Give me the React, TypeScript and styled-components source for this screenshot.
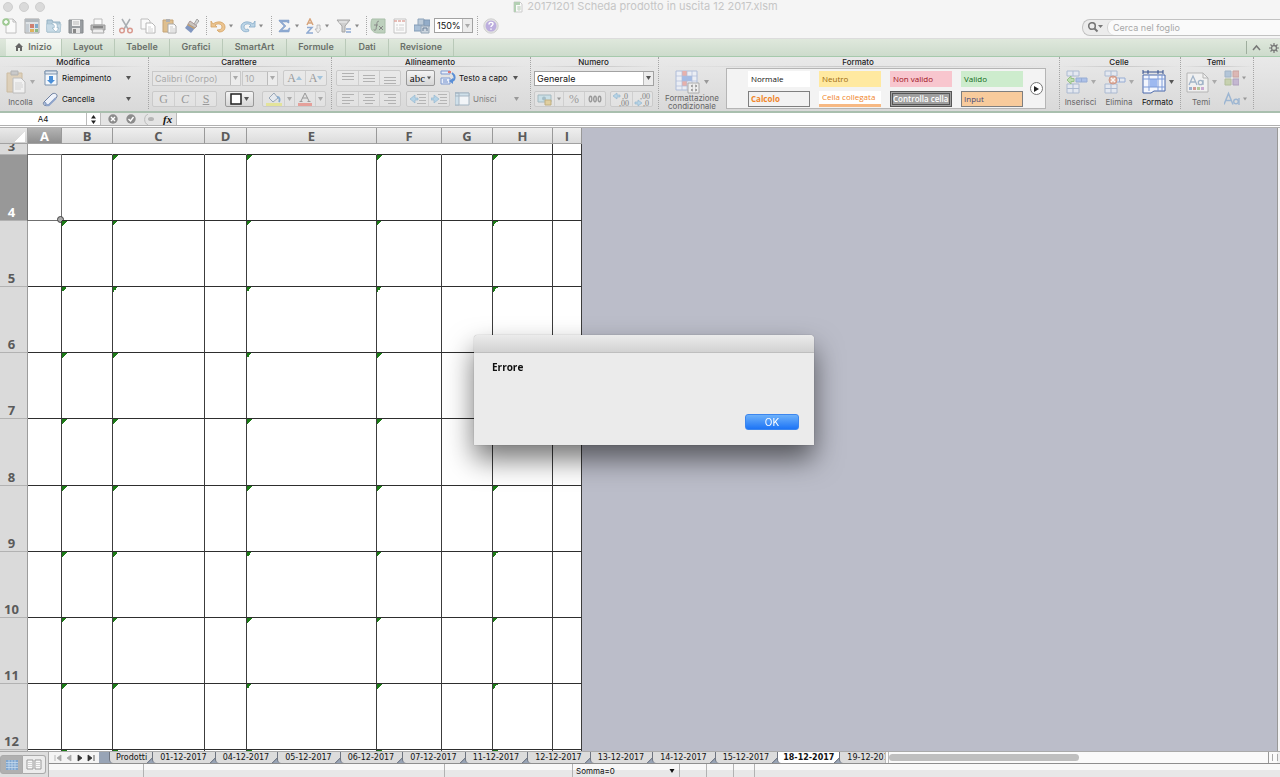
import React from "react";
import styled, { createGlobalStyle, css } from "styled-components";

const UI = `Inter, "Noto Sans", sans-serif`;
const HUMANIST = `"Open Sans", "Noto Sans", sans-serif`;

const GlobalStyle = createGlobalStyle`
  * { box-sizing: border-box; }
  body { margin: 0; background: #f5f5f5; font-family: ${UI}; font-size: 8px; color: #111; overflow: hidden; }
  button, input, select { font: inherit; color: inherit; margin: 0; padding: 0; border: 0; background: none; outline: none; }
  button { display: inline-flex; align-items: center; justify-content: center; white-space: nowrap; }
  svg { display: block; flex: none; }
`;

const AppWindow = styled.div`
  display: flex;
  flex-direction: column;
  height: 100vh;
`;

/* ---------- title bar ---------- */
const TitleBar = styled.header`
  display: grid;
  grid-template-columns: 44px 1fr 36px;
  align-items: center;
  height: 13px;
  padding-left: 3px;
`;
const Lights = styled.div`
  display: flex;
  gap: 6px;
`;
const Light = styled.button`
  width: 10px;
  height: 10px;
  border-radius: 50%;
  background: #dadada;
  border: 1px solid #cfcfcf;
`;
const DocTitle = styled.h1`
  display: flex;
  align-items: center;
  justify-content: center;
  gap: 4px;
  margin: 0;
  font-size: 11px;
  line-height: 13px;
  font-weight: 400;
  color: #c6c6c6;
`;

/* ---------- quick toolbar ---------- */
const QuickBar = styled.div`
  display: flex;
  align-items: center;
  height: 25px;
`;
const ToolButton = styled.button<{ $menu?: boolean }>`
  width: ${(p) => (p.$menu ? 30 : 22)}px;
  height: 20px;
  justify-content: flex-start;
  gap: 3px;
  padding-left: 2px;
`;
const ToolSeparator = styled.span<{ $w?: number }>`
  width: ${(p) => p.$w ?? 4}px;
  height: 19px;
  display: flex;
  justify-content: center;
  &::before {
    content: "";
    border-left: 1px dotted #a8a8a8;
  }
`;
const SearchBox = styled.label`
  display: flex;
  align-items: center;
  width: 198px;
  height: 17px;
  margin: 3px 0 0 auto;
  border: 1px solid #c2c2c2;
  border-right: 0;
  border-radius: 8px 0 0 8px;
  background: #ececec;
  overflow: hidden;
`;
const SearchIcon = styled.span`
  display: flex;
  width: 24px;
  padding-left: 4px;
`;
const SearchInput = styled.input`
  flex: 1;
  min-width: 0;
  height: 15px;
  padding-left: 5px;
  border-left: 1px solid #d2d2d2;
  border-radius: 7px 0 0 7px;
  background: #fafafa;
  font-size: 9px;
  &::placeholder { color: #a8a8a8; opacity: 1; }
`;

/* ---------- drop-downs ---------- */
const SelectShell = styled.span<{ $w: number; $off?: boolean }>`
  display: inline-flex;
  align-items: center;
  position: relative;
  width: ${(p) => p.$w}px;
  height: 15px;
  border: 1px solid ${(p) => (p.$off ? "#c9c9c9" : "#a2a2a2")};
  background: ${(p) => (p.$off ? "#e6e6e6" : "#fff")};
  color: ${(p) => (p.$off ? "#aaa" : "#111")};
  font-size: 9px;
  & select {
    appearance: none;
    width: 100%;
    height: 13px;
    padding-left: 2px;
    opacity: 1;
  }
`;
const SelectArrow = styled.span`
  position: absolute;
  right: 0;
  top: 0;
  display: flex;
  align-items: center;
  justify-content: center;
  width: 10px;
  height: 13px;
  border-left: 1px solid #bbb;
  background: #ececec;
  pointer-events: none;
`;

/* ---------- ribbon tabs ---------- */
const TabStrip = styled.nav`
  display: flex;
  align-items: stretch;
  height: 19px;
  padding-left: 6px;
  border-top: 1px solid #dcdcdc;
  border-bottom: 1px solid #a5c9ac;
  background: linear-gradient(#dfe8dc, #cddbcc);
`;
const RibbonTab = styled.button<{ $w: number; $active?: boolean }>`
  width: ${(p) => p.$w}px;
  gap: 5px;
  padding-bottom: 2px;
  border-right: 1px solid #b9c9b8;
  font-size: 9px;
  font-weight: 600;
  color: #6a706a;
  ${(p) => p.$active && css`background: linear-gradient(#f3f7f1, #e3ebe1);`}
`;
const TabTools = styled.div`
  display: flex;
  align-items: center;
  gap: 8px;
  margin: 2px 0 2px auto;
  padding-left: 5px;
  border-left: 1px solid #9fae9e;
`;

/* ---------- ribbon ---------- */
const Ribbon = styled.div`
  display: flex;
  height: 56px;
  border-bottom: 2px solid #a9bfae;
  background: linear-gradient(#e9e9e9, #d9d9d9);
`;
const Group = styled.section<{ $w: number }>`
  display: flex;
  flex-direction: column;
  width: ${(p) => p.$w}px;
  height: 52px;
  border-right: 1px dotted #a5a5a5;
`;
const GroupTitle = styled.h2`
  margin: 0;
  height: 10px;
  line-height: 10px;
  padding-right: 2px;
  font-size: 8px;
  font-weight: 500;
  text-align: center;
  color: #222;
  border-bottom: 1px solid;
  border-image: linear-gradient(90deg, transparent, #c6c6c6, transparent) 1;
`;
const GroupBody = styled.div<{ $gap?: number; $pad?: number }>`
  display: flex;
  gap: ${(p) => p.$gap ?? 0}px;
  padding: 3px 0 0 ${(p) => p.$pad ?? 3}px;
`;
const Stack = styled.div`
  display: flex;
  flex-direction: column;
  gap: 5px;
`;
const Line = styled.div<{ $gap?: number }>`
  display: flex;
  align-items: center;
  gap: ${(p) => p.$gap ?? 0}px;
  height: 16px;
`;
const BigButton = styled.button<{ $w: number; $on?: boolean; $two?: boolean }>`
  flex-direction: column;
  justify-content: flex-start;
  width: ${(p) => p.$w}px;
  height: 38px;
  line-height: 8px;
  gap: ${(p) => (p.$two ? 0 : 4)}px;
  white-space: ${(p) => (p.$two ? "normal" : "nowrap")};
  color: ${(p) => (p.$on ? "#111" : "#666")};
`;
const BigIcon = styled.span`
  display: flex;
  align-items: center;
  gap: 3px;
  height: 24px;
`;
const MenuButton = styled.button<{ $w: number; $off?: boolean }>`
  width: ${(p) => p.$w}px;
  height: 16px;
  justify-content: flex-start;
  gap: 3px;
  color: ${(p) => (p.$off ? "#808080" : "#111")};
  & > :last-child { margin-left: auto; }
`;
const Segments = styled.div`
  display: flex;
  height: 16px;
  border: 1px solid #cacaca;
  border-radius: 2px;
  background: rgba(240, 240, 240, 0.35);
  & > * + * { border-left: 1px solid #cfcfcf; }
`;
const Segment = styled.button<{ $w: number; $italic?: boolean; $underline?: boolean }>`
  width: ${(p) => p.$w}px;
  font-family: "Liberation Serif", serif;
  font-size: 12px;
  line-height: 12px;
  color: #999;
  font-style: ${(p) => (p.$italic ? "italic" : "normal")};
  text-decoration: ${(p) => (p.$underline ? "underline" : "none")};
`;
const ActiveButton = styled.button<{ $w: number }>`
  width: ${(p) => p.$w}px;
  height: 16px;
  gap: 2px;
  border: 1px solid #999;
  border-radius: 2px;
  background: linear-gradient(#f4f4f4, #d6d6d6);
  font-family: "Liberation Serif", serif;
  font-size: 11px;
`;

/* ---------- cell style gallery ---------- */
const Gallery = styled.div`
  display: flex;
  align-items: center;
  width: 320px;
  height: 41px;
  margin-top: -2px;
  padding-left: 21px;
  border: 1px solid #b5b5b5;
  background: #f3f3f3;
`;
const Swatches = styled.div`
  display: grid;
  grid-template-columns: repeat(4, 62px);
  gap: 4px 9px;
`;
const Swatch = styled.button<{ $bg: string; $fg: string; $border?: string; $kind?: "double" | "under"; $bold?: boolean }>`
  height: 16px;
  justify-content: flex-start;
  padding: 0 3px;
  font-family: ${HUMANIST};
  line-height: 10px;
  font-weight: ${(p) => (p.$bold ? 700 : 500)};
  background: ${(p) => p.$bg};
  color: ${(p) => p.$fg};
  ${(p) => p.$border && !p.$kind && css`border: 1px solid ${p.$border}; padding: 0 2px;`}
  ${(p) => p.$kind === "double" && css`border: 3px double ${p.$border}; padding: 0; font-weight: 600;`}
  ${(p) => p.$kind === "under" && css`border-bottom: 3px solid ${p.$border};`}
`;
const MoreButton = styled.button`
  width: 13px;
  height: 13px;
  margin-left: 7px;
  border: 1px solid #777;
  border-radius: 50%;
  background: #fff;
`;

/* ---------- formula bar ---------- */
const FormulaBar = styled.div`
  display: flex;
  height: 15px;
  border-bottom: 3px double #b0b0b0;
  background: #fff;
`;
const NameBox = styled.input`
  width: 87px;
  text-align: center;
  font-size: 8px;
  border-right: 1px solid #bbb;
`;
const Stepper = styled.button`
  width: 14px;
  border-right: 1px solid #bbb;
`;
const FormulaTools = styled.div`
  display: flex;
  align-items: center;
  gap: 8px;
  width: 76px;
  padding-left: 7px;
  background: #e4e4e4;
  border-right: 1px solid #bbb;
`;
const FxButton = styled.button`
  font-family: "Liberation Serif", serif;
  font-style: italic;
  font-weight: 700;
  font-size: 11px;
  line-height: 11px;
`;
const FormulaInput = styled.input`
  flex: 1;
`;

/* ---------- sheet ---------- */
const SheetArea = styled.main`
  display: flex;
  flex: 1;
  min-height: 0;
  overflow: hidden;
  background: #bbbdc9;
`;
const Gutter = styled.div`
  width: 3px;
  margin-left: auto;
  border-left: 1px solid #999;
  background: #f5f5f5;
`;
const Grid = styled.table`
  border-collapse: separate;
  border-spacing: 0;
  table-layout: fixed;
  width: 582px;
  align-self: flex-start;
  font-family: ${HUMANIST};
  background: #fff;
`;
const Corner = styled.th`
  height: 16px;
  padding: 0;
  border-right: 1px solid #a2a2a2;
  border-bottom: 1px solid #a2a2a2;
  background: linear-gradient(135deg, transparent 50%, #fff 50%) no-repeat right 2px bottom 1px / 11px 11px, linear-gradient(#e9e9e9, #d2d2d2);
`;
const ColumnHead = styled.th<{ $selected?: boolean }>`
  height: 16px;
  padding: 0;
  font-size: 13px;
  line-height: 14px;
  font-weight: 700;
  color: ${(p) => (p.$selected ? "#fff" : "#5a5a5a")};
  background: ${(p) => (p.$selected ? "linear-gradient(#b4b4b4, #8f8f8f)" : "linear-gradient(#efefef, #dcdcdc)")};
  border-right: 1px solid #999;
  border-bottom: 1px solid #a2a2a2;
`;
const RowHead = styled.th<{ $selected?: boolean }>`
  padding: 0 4px 0 0;
  vertical-align: bottom;
  font-size: 13px;
  line-height: 16px;
  font-weight: 700;
  color: ${(p) => (p.$selected ? "#fff" : "#5a5a5a")};
  background: ${(p) => (p.$selected ? "#989898" : "#dadada")};
  border-right: 1px solid #9c9c9c;
  border-bottom: 1px solid #b2b2b2;
`;
const ClippedNumber = styled.div`
  display: flex;
  align-items: flex-end;
  justify-content: center;
  height: 10px;
  overflow: hidden;
`;
const Cell = styled.td<{ $h: number; $flag?: boolean; $edge?: boolean }>`
  position: relative;
  height: ${(p) => p.$h}px;
  padding: 0;
  border-bottom: 1px solid #2e2e2e;
  border-right: 1px solid ${(p) => (p.$edge ? "#3c3c3c" : "transparent")};
  ${(p) => p.$flag && css`background: linear-gradient(135deg, #1b7a16 50%, transparent 50%) no-repeat 0 0 / 5px 5px;`}
`;
const Selection = styled.span`
  position: absolute;
  inset: -1px;
  border: 1px solid #6f6f6f;
  &::after {
    content: "";
    position: absolute;
    right: -3px;
    bottom: -3px;
    width: 5px;
    height: 5px;
    border: 1px solid #444;
    border-radius: 50%;
    background: #aaa;
  }
`;

/* ---------- bottom area ---------- */
const Footer = styled.footer`
  display: flex;
  height: 26px;
  border-top: 1px solid #aaa;
  background: #dedede;
`;
const ViewSwitch = styled.div`
  display: flex;
  align-items: center;
  width: 49px;
  border-right: 1px solid #aaa;
`;
const ViewButton = styled.button<{ $active?: boolean }>`
  width: 23px;
  height: 19px;
  border: 1px solid #aaa;
  background: ${(p) => (p.$active ? "#b0b0b0" : "#ececec")};
  &:first-child { border-radius: 3px 0 0 3px; }
  &:last-child { border-radius: 0 3px 3px 0; border-left: 0; }
`;
const FooterRows = styled.div`
  display: flex;
  flex-direction: column;
  flex: 1;
  min-width: 0;
`;
const SheetTabsRow = styled.div`
  display: flex;
  height: 12px;
  border-bottom: 1px solid #8e8e8e;
  background: #98a4b6;
`;
const SheetNav = styled.div`
  display: flex;
  align-items: center;
  width: 50px;
  margin-right: 10px;
  background: #f4f4f4;
`;
const NavButton = styled.button`
  width: 11px;
  height: 11px;
  &:first-child { margin-left: 3px; }
`;
const SheetTabs = styled.div`
  display: flex;
  width: 776px;
  overflow: hidden;
`;
const SheetTab = styled.button<{ $active?: boolean }>`
  position: relative;
  flex: none;
  height: 11px;
  padding: 0 8px 0 7px;
  border-left: 1px solid #6e7480;
  border-radius: 0 0 0 4px;
  background: ${(p) => (p.$active ? "#fff" : "#dcdcdc")};
  font-family: "DejaVu Sans", sans-serif;
  font-size: 8px;
  line-height: 11px;
  font-weight: ${(p) => (p.$active ? 700 : 400)};
  &:first-child { padding: 0 5px 0 6px; }
  ${(p) => p.$active && css`padding: 0 5px;`}
  &::after {
    content: "";
    position: absolute;
    right: 0;
    bottom: 0;
    width: 5px;
    height: 6px;
    background: linear-gradient(135deg, transparent 50%, #6e7480 50%, #98a4b6 70%);
  }
`;
const ScrollTrack = styled.div`
  flex: 1;
  display: flex;
  align-items: center;
  border-left: 4px double #bbb;
  background: #fafafa;
`;
const ScrollThumb = styled.div`
  width: 50%;
  height: 7px;
  border-radius: 4px;
  background: #bfbfbf;
`;
const ScrollGrip = styled.div`
  width: 12px;
  padding: 2px 3px;
  border-left: 1px solid #999;
  border-right: 3px solid #f0f0f0;
  background: #fafafa;
  &::before {
    content: "";
    display: block;
    width: 4px;
    height: 7px;
    border: solid #aaa;
    border-width: 0 1px;
  }
`;
const StatusBar = styled.div`
  display: flex;
  flex: 1;
  background: linear-gradient(#f8f8f8 50%, #e8e8e8 50%);
`;
const StatusCell = styled.div<{ $w?: number }>`
  display: flex;
  align-items: center;
  justify-content: space-between;
  ${(p) => (p.$w ? css`width: ${p.$w}px; border-right: 1px solid #b2b2b2;` : css`flex: 1;`)}
  padding: 0 3px;
  font-size: 8px;
`;

/* ---------- dialog ---------- */
const Dialog = styled.div`
  position: fixed;
  left: calc(50% + 4px);
  top: 335px;
  transform: translateX(-50%);
  display: flex;
  flex-direction: column;
  width: 340px;
  height: 110px;
  border-radius: 4px 4px 0 0;
  background: #ebebeb;
  box-shadow: 0 0 1px rgba(0, 0, 0, 0.5), 0 14px 28px rgba(0, 0, 0, 0.55);
`;
const DialogBar = styled.div`
  height: 18px;
  border-bottom: 1px solid #bebebe;
  border-radius: 4px 4px 0 0;
  background: linear-gradient(#ebebeb, #d2d2d2);
`;
const DialogText = styled.p`
  margin: 0;
  padding: 7px 18px;
  font-family: ${HUMANIST};
  font-size: 10px;
  line-height: 14px;
  font-weight: 700;
`;
const DialogActions = styled.div`
  display: flex;
  justify-content: flex-end;
  margin-top: auto;
  padding: 0 15px 15px;
`;
const OkButton = styled.button`
  width: 54px;
  height: 16px;
  border: 1px solid #3c86ee;
  border-radius: 3px;
  background: linear-gradient(#6db1fa, #1d74f6);
  color: #fff;
  font-size: 10px;
`;

/* ---------- drawings ---------- */
const Caret = ({ c = "#555", s = 5 }: { c?: string; s?: number }) => (
  <svg width={s} height="4" viewBox="0 0 5 4"><path d="M0 0h5L2.500 4z" fill={c} /></svg>
);
const Art = ({ children, w = 16, h = 16, o = 1 }: { children: React.ReactNode; w?: number; h?: number; o?: number }) => (
  <svg width={w} height={h} viewBox={`0 0 ${w} ${h}`} fill="none" opacity={o}>{children}</svg>
);

const tools: Record<string, React.ReactNode> = {
  Nuovo: <Art><path d="M4 1h7l3 3v11H4z" fill="#fafafa" stroke="#c0c0c0" /><path d="M11 1v3h3" stroke="#bbb" /><circle cx="4" cy="4" r="3.800" fill="#9fca94" /><path d="M4 2v4M2 4h4" stroke="#fff" strokeWidth="1.500" /></Art>,
  Modelli: <Art><path d="M1 1h14v14H1z" fill="#dfe3e6" stroke="#a5a5a5" /><path d="M1 1h14v3H1z" fill="#b3b9be" /><path d="M2 6h3v8H2z" fill="#c5ccd2" /><path d="M6 6h4v4H6z" fill="#cf7f70" /><path d="M11 6h3v4h-3z" fill="#7faacb" /><path d="M6 11h4v3H6z" fill="#dfb35e" /><path d="M11 11h3v3h-3z" fill="#8fb987" /></Art>,
  Apri: <Art><path d="M1 2h5l1 2h7v10H1z" fill="#b5ccdb" stroke="#94b0c2" /><path d="M0 6h15l-1 8H1z" fill="#c7dae6" stroke="#a5bfce" strokeWidth=".6" /><path d="M6 5c4-1 6 1 5 5h2l-3 4-4-4h2c1-2 0-4-2-4z" fill="#fff" stroke="#8cabc0" strokeWidth=".6" /></Art>,
  Salva: <Art><path d="M1 2h14v13H1z" fill="#999da1" stroke="#84888b" /><path d="M4 2h8v6H4z" fill="#f2f2f2" /><path d="M5 4h6M5 6h6" stroke="#bbb" /><path d="M4 10h8v5H4z" fill="#e4e4e4" /><path d="M5 11h3v4H5z" fill="#888" /></Art>,
  Stampa: <Art><path d="M4 1h8v6H4z" fill="#fafafa" stroke="#bbb" /><path d="M1 7h14v5H1z" fill="#bababa" stroke="#999" /><path d="M3 9h10" stroke="#777" strokeWidth="1.500" /><path d="M3 11h10l1 4H2z" fill="#eee" stroke="#aaa" /></Art>,
  Taglia: <Art><path d="M4 1l6 10M12 1L6 11" stroke="#aaaeb2" strokeWidth="1.500" /><circle cx="4" cy="12.500" r="2.300" stroke="#d99a90" strokeWidth="1.500" /><circle cx="12" cy="12.500" r="2.300" stroke="#d99a90" strokeWidth="1.500" /></Art>,
  Copia: <Art><path d="M1 1h7l2 2v8H1z" fill="#fafafa" stroke="#bdbdbd" /><path d="M6 5h6l3 3v7H6z" fill="#fff" stroke="#b8b8b8" /><path d="M8 9h3M8 11h5M8 13h5" stroke="#d2d2d2" /></Art>,
  Incolla: <Art><path d="M1 2h10v12H1z" fill="#dfbf8e" stroke="#c4a478" /><path d="M4 1h4v3H4z" fill="#b0b0b0" /><path d="M6 6h6l2 2v7H6z" fill="#fafafa" stroke="#aaa" /><path d="M8 9h3M8 11h5M8 13h5" stroke="#ccc" /></Art>,
  Formato: <Art><path d="M10 6l3-5 2 2-4 5z" fill="#d4d4d4" stroke="#a5a5a5" /><path d="M6 3l7 5-2 2-7-4z" fill="#c9c3bd" stroke="#a99" /><path d="M4 6l7 4-4 5-6-5z" fill="#8297c0" /><path d="M4 6l7 4-1 1-7-4z" fill="#c9a26c" /></Art>,
  Annulla: <Art><path d="M1 3v6h6L5 7c3-2 7-1 7 2 0 2-2 3-5 3l2 2c4 0 6-2 6-5 0-5-7-7-12-3z" fill="#ecc591" stroke="#d3a265" strokeWidth=".8" /></Art>,
  Ripeti: <Art><path d="M15 3v6H9l2-2C8 5 4 6 4 9c0 2 2 3 4 2l1 2c-4 2-8 0-8-4 0-5 7-7 12-3z" fill="#bcd5e7" stroke="#87abc8" strokeWidth=".8" /></Art>,
  Somma: <Art><path d="M3 2h10v3h-1l-1-1H6l4 4-4 4h6l1-2h1l-1 4H3v-1l5-5-5-5z" fill="#8faad2" stroke="#819cc6" strokeWidth=".5" /></Art>,
  Ordina: <Art><path d="M1 7l3-6 3 6M2 5h4" stroke="#d6a47c" strokeWidth="1.500" /><path d="M1 9.500h5L1 15h6" stroke="#8faad2" strokeWidth="1.500" /><path d="M11 7v4H9l3 4 3-4h-1V7z" fill="#ececec" stroke="#b5b5b5" strokeWidth=".8" /></Art>,
  Filtro: <Art><path d="M1 2h13L9 8v6H6V8z" fill="#cfcfcf" stroke="#a5a5a5" /><path d="M3 4h8" stroke="#f0f0f0" /><path d="M10 11h5M10 14h5" stroke="#8fa9d2" strokeWidth="1.500" /></Art>,
  Formula: <Art><path d="M2 1h13v14H8c-5 0-7-3-7-7 0-3 0-5 1-7z" fill="#bdd0bd" stroke="#a9bfa9" /><path d="M9 3.500c-2-1-2 1-3 8-1 1-2 1-2 0M4 7h4M9 8l4 4M13 8l-4 4" stroke="#888" /></Art>,
  Casella: <Art><path d="M2 1h12v14H2z" fill="#fafafa" stroke="#c4c4c4" /><path d="M2 3h12" stroke="#dfa9a1" strokeWidth="1.500" strokeDasharray="3 1" /><path d="M4 7h2M7 7h5M4 10h2M7 10h5M4 12h8" stroke="#d2d2d2" /></Art>,
  Multimedia: <Art><path d="M0 7h8v6H0z" fill="#a9bfd6" stroke="#829bb6" /><path d="M4 1h6v6H4z" fill="#bccad8" stroke="#8ea4bb" /><path d="M10 2h6v6h-6z" fill="#93acc8" stroke="#8199b3" /><path d="M7 8h8v7H7z" fill="#ccd5de" stroke="#93a4b5" /><path d="M9 13v-3h4v3" stroke="#687f98" /></Art>,
  Guida: <Art><circle cx="8" cy="8" r="7.200" fill="#e2e2e2" stroke="#d0d0d0" /><circle cx="8" cy="8" r="5.500" fill="#bcaede" /><path d="M6 6.500c0-3 4-2.500 4-.500 0 1.500-2 1.500-2 3M8 10.500v1.300" stroke="#fff" strokeWidth="1.400" /></Art>,
};

const Tool = ({ name, menu }: { name: string; menu?: boolean }) => (
  <ToolButton $menu={menu} aria-label={name}>{tools[name]}{menu && <Caret c="#888" s={4} />}</ToolButton>
);

const Bars = ({ rows }: { rows: [number, number, number][] }) => (
  <Art w={14} h={12}>
    {rows.map(([x, y, w], i) => <path key={i} d={`M${x} ${y + 0.5}h${w}`} stroke="#b2b2b2" />)}
  </Art>
);
const Indent = ({ flip }: { flip?: boolean }) => (
  <Art w={16} h={12}>
    <path d="M7 1.500h9M9 4.500h7M9 7.500h7M7 10.500h9" stroke="#b5b5b5" />
    <path d={flip ? "M0 5h3V2l5 4-5 4V7H0z" : "M8 5H5V2L0 6l5 4V7h3z"} fill="#b5d3e6" stroke="#8db4ce" strokeWidth=".6" />
  </Art>
);
const Decimals = ({ flip }: { flip?: boolean }) => (
  <Art w={18} h={15}>
    <text x={flip ? 6 : 9} y="7" fontSize="8" fontFamily="Liberation Serif" fill="#808080">{flip ? ",00" : ",0"}</text>
    <text x={flip ? 9 : 6} y="14" fontSize="8" fontFamily="Liberation Serif" fill="#808080">{flip ? ",0" : ",00"}</text>
    <path d={flip ? "M1 10h3V8l4 3-4 3v-2H1z" : "M7 3H4V1L0 4l4 3V5h3z"} fill="#b8d4e6" stroke="#8db4ce" strokeWidth=".6" />
  </Art>
);

const TableBlocks = ({ kind }: { kind: "insert" | "delete" }) => (
  <Art w={22} h={24} o={0.75}>
    <path d="M1 1h12v5H1zM7 1v5M1 14h12v9H1zM7 14v9M1 18.500h12" stroke="#9aadcc" fill="#e4eaf5" />
    <path d="M10 8h11v4H10zM15.500 8v4" fill={kind === "insert" ? "#9cb6ea" : "#e4eaf5"} stroke="#7f9bd0" />
    {kind === "insert"
      ? <path d="M8 8.500H5V6L1 10l4 4v-2.500h3z" fill="#b4dca5" stroke="#7fb86c" />
      : <><circle cx="9" cy="10" r="4" fill="#e0a08a" stroke="#c77f68" /><path d="M7 8l4 4M11 8l-4 4" stroke="#fff" strokeWidth="1.500" /></>}
  </Art>
);

const ribbonTabs: [string, number][] = [
  ["Layout", 53], ["Tabelle", 55], ["Grafici", 53], ["SmartArt", 64], ["Formule", 59], ["Dati", 43], ["Revisione", 65],
];
const columns: [string, number, boolean][] = [
  ["A", 34, false], ["B", 51, true], ["C", 92, true], ["D", 42, false], ["E", 130, true],
  ["F", 65, true], ["G", 51, false], ["H", 60, true], ["I", 29, false],
];
const rows: [number, number][] = [[4, 66], [5, 66], [6, 66], [7, 66], [8, 67], [9, 66], [10, 66], [11, 66], [12, 66]];
const sheets = ["01-12-2017", "04-12-2017", "05-12-2017", "06-12-2017", "07-12-2017", "11-12-2017", "12-12-2017", "13-12-2017", "14-12-2017", "15-12-2017", "18-12-2017", "19-12-2017"];
const navShapes = ["M1 1v6M7 1v6L3 4z", "M6 1v6L2 4z", "M2 1v6l4-3z", "M1 1v6l4-3zM7 1v6"];

export default function App() {
  return (
    <AppWindow>
      <GlobalStyle />
      <TitleBar>
        <Lights><Light aria-label="Chiudi" /><Light aria-label="Riduci" /><Light aria-label="Ingrandisci" /></Lights>
        <DocTitle>
          <Art w={10} h={12}><path d="M1 1h6l2 2v8H1z" fill="#fafafa" stroke="#ccc" /><path d="M1 1h6v3H3v7H1z" fill="#b4d0b4" /><path d="M4 6h4M4 8h4M6 5v5" stroke="#c5d6c5" /></Art>
          20171201 Scheda prodotto in uscita 12 2017.xlsm
        </DocTitle>
      </TitleBar>

      <QuickBar>
        {["Nuovo", "Modelli", "Apri", "Salva", "Stampa"].map((n) => <Tool key={n} name={n} />)}
        <ToolSeparator $w={6} />
        {["Taglia", "Copia", "Incolla", "Formato"].map((n) => <Tool key={n} name={n} />)}
        <ToolSeparator />
        <Tool name="Annulla" menu /><Tool name="Ripeti" menu />
        <ToolSeparator $w={6} />
        <Tool name="Somma" menu /><Tool name="Ordina" menu /><Tool name="Filtro" menu />
        <ToolSeparator />
        {["Formula", "Casella", "Multimedia"].map((n) => <Tool key={n} name={n} />)}
        <SelectShell $w={39}>
          <select aria-label="Zoom"><option>150%</option></select>
          <SelectArrow><Caret c="#aaa" /></SelectArrow>
        </SelectShell>
        <ToolSeparator $w={8} />
        <Tool name="Guida" />
        <SearchBox>
          <SearchIcon>
            <Art w={17} h={12}><circle cx="5" cy="5" r="3.300" stroke="#777" strokeWidth="1.600" /><path d="M7.500 7.500l3 3" stroke="#777" strokeWidth="2" /><path d="M11 4h5l-2.500 3z" fill="#777" /></Art>
          </SearchIcon>
          <SearchInput placeholder="Cerca nel foglio" aria-label="Cerca nel foglio" />
        </SearchBox>
      </QuickBar>

      <TabStrip>
        <RibbonTab $w={56} $active>
          <Art w={8} h={8}><path d="M4 0L0 4h1v4h2V5h2v3h2V4h1z" fill="#666" /></Art>
          Inizio
        </RibbonTab>
        {ribbonTabs.map(([t, w]) => <RibbonTab key={t} $w={w}>{t}</RibbonTab>)}
        <TabTools>
          <Art w={9} h={7}><path d="M1 6l3.500-4L8 6" stroke="#777" strokeWidth="1.500" /></Art>
          <Art w={11} h={10}><circle cx="5" cy="5" r="2.500" stroke="#777" strokeWidth="1.300" /><path d="M5 0v2M5 8v2M0 5h2M8 5h2M1.500 1.500l1.400 1.400M7 7l1.500 1.500M1.500 8.500L3 7M7 3l1.500-1.500" stroke="#777" strokeWidth="1.200" /></Art>
        </TabTools>
      </TabStrip>

      <Ribbon>
        <Group $w={149}>
          <GroupTitle>Modifica</GroupTitle>
          <GroupBody $pad={2}>
            <BigButton $w={37}>
              <BigIcon>
                <Art w={21} h={24} o={0.65}><path d="M1 3h15v19H1z" fill="#dcc7a5" stroke="#c0a880" /><path d="M5 1h7v4H5z" fill="#bbb" stroke="#999" /><path d="M7 8h8l4 4v11H7z" fill="#fafafa" stroke="#aaa" /><path d="M9 13h7M9 15h8M9 17h8M9 19h6" stroke="#ccc" /></Art>
                <Caret c="#aaa" />
              </BigIcon>
              Incolla
            </BigButton>
            <Stack>
              <MenuButton $w={92}>
                <Art w={20}><path d="M6 1h12v14H6z" fill="#f4f8fc" stroke="#7c93ad" /><path d="M6 1h12v3H6z" fill="#dfe6ee" stroke="#7c93ad" /><path d="M10 6h4v4h2l-4 4-4-4h2z" fill="#4a8fd8" /></Art>
                Riempimento <Caret />
              </MenuButton>
              <MenuButton $w={92}>
                <Art w={20}><path d="M5 11l8-8c3-2 7 1 4 4l-8 7c-3 2-6-1-4-3z" fill="#eef2fa" stroke="#6d7f9f" /><path d="M6 11c0 2 2 4 4 3l7-7" stroke="#8fa4ca" strokeWidth="2" /></Art>
                Cancella <Caret />
              </MenuButton>
            </Stack>
          </GroupBody>
        </Group>

        <Group $w={183}>
          <GroupTitle>Carattere</GroupTitle>
          <GroupBody>
            <Stack>
              <Line $gap={1}>
                <SelectShell $w={89} $off>
                  <select aria-label="Tipo di carattere" disabled><option>Calibri (Corpo)</option></select>
                  <SelectArrow><Caret c="#aaa" /></SelectArrow>
                </SelectShell>
                <SelectShell $w={36} $off>
                  <select aria-label="Dimensione carattere" disabled><option>10</option></select>
                  <SelectArrow><Caret c="#aaa" /></SelectArrow>
                </SelectShell>
                <Line $gap={4}><span /><Segments>
                  <Segment $w={21} aria-label="Aumenta dimensione">A<Art w={6} h={4}><path d="M0 4h6L3 0z" fill="#a3c4dc" /></Art></Segment>
                  <Segment $w={21} aria-label="Riduci dimensione">A<Art w={6} h={4}><path d="M0 0h6L3 4z" fill="#a3c4dc" /></Art></Segment>
                </Segments></Line>
              </Line>
              <Line $gap={8}>
                <Segments>
                  <Segment $w={21}>G</Segment><Segment $w={21} $italic>C</Segment><Segment $w={21} $underline>S</Segment>
                </Segments>
                <ActiveButton $w={29} aria-label="Bordi">
                  <Art w={12} h={12}><path d="M1 1h10v10H1z" fill="#fff" stroke="#222" strokeWidth="1.500" /></Art><Caret />
                </ActiveButton>
                <Segments>
                  <Segment $w={21} aria-label="Colore riempimento"><Art w={16} h={14}><path d="M3 6l5-5 4 5-5 4z" fill="#e5e9ee" stroke="#9aa8b8" /><path d="M11 5c3 0 3 3 2 5" stroke="#86aacd" strokeWidth="1.800" /><path d="M0 11h16v3H0z" fill="#e3e39a" /></Art></Segment>
                  <Segment $w={10} aria-label="Altri colori"><Caret c="#aaa" /></Segment>
                  <Segment $w={21} aria-label="Colore carattere"><Art w={16} h={14}><path d="M4 9l4-8 4 8M5.500 6h5M2.500 9.500h3M10.500 9.500h3" stroke="#999" /><path d="M1 11h14v3H1z" fill="#e5a09a" /></Art></Segment>
                  <Segment $w={10} aria-label="Altri colori carattere"><Caret c="#aaa" /></Segment>
                </Segments>
              </Line>
            </Stack>
          </GroupBody>
        </Group>

        <Group $w={199}>
          <GroupTitle>Allineamento</GroupTitle>
          <GroupBody $pad={4}>
            <Stack>
              <Line $gap={5}>
                <Segments>
                  <Segment $w={21} aria-label="In alto"><Bars rows={[[1, 1, 12], [1, 4, 12], [1, 7, 12]]} /></Segment>
                  <Segment $w={21} aria-label="Al centro"><Bars rows={[[1, 3, 12], [1, 6, 12], [1, 9, 12]]} /></Segment>
                  <Segment $w={21} aria-label="In basso"><Bars rows={[[1, 5, 12], [1, 8, 12], [1, 11, 12]]} /></Segment>
                </Segments>
                <ActiveButton $w={29}>abc<Caret s={4} /></ActiveButton>
                <MenuButton $w={78}>
                  <Art w={16}><path d="M1 1h9v3H1zM1 8h9v6H1z" fill="#e8eefa" stroke="#7f99cf" /><path d="M8 2h3" stroke="#d77" strokeWidth="2" /><path d="M3 10h4M3 12h5" stroke="#6f8cc9" /><path d="M12 3c4 3 3 8-1 8" stroke="#5a8fd6" strokeWidth="2" /><path d="M13 8v6l-4-3z" fill="#5a8fd6" /></Art>
                  Testo a capo <Caret />
                </MenuButton>
              </Line>
              <Line $gap={5}>
                <Segments>
                  <Segment $w={21} aria-label="A sinistra"><Bars rows={[[1, 1, 12], [1, 4, 8], [1, 7, 12], [1, 10, 8]]} /></Segment>
                  <Segment $w={21} aria-label="Centrato"><Bars rows={[[1, 1, 12], [3, 4, 8], [1, 7, 12], [3, 10, 8]]} /></Segment>
                  <Segment $w={21} aria-label="A destra"><Bars rows={[[1, 1, 12], [5, 4, 8], [1, 7, 12], [5, 10, 8]]} /></Segment>
                </Segments>
                <Segments>
                  <Segment $w={21} aria-label="Riduci rientro"><Indent /></Segment>
                  <Segment $w={21} aria-label="Aumenta rientro"><Indent flip /></Segment>
                </Segments>
                <MenuButton $w={64} $off>
                  <Art w={15}><path d="M0 2h14v12H0z" fill="#f2f5f8" stroke="#a5b5c2" /><path d="M0 2h14v3H0zM0 2h4v12H0z" fill="#cfe0ea" stroke="#a5b5c2" /></Art>
                  Unisci <Caret c="#999" />
                </MenuButton>
              </Line>
            </Stack>
          </GroupBody>
        </Group>

        <Group $w={128}>
          <GroupTitle>Numero</GroupTitle>
          <GroupBody>
            <Stack>
              <Line>
                <SelectShell $w={120}>
                  <select aria-label="Formato numero"><option>Generale</option></select>
                  <SelectArrow><Caret /></SelectArrow>
                </SelectShell>
              </Line>
              <Line $gap={4}>
                <Segments>
                  <Segment $w={19} aria-label="Valuta"><Art w={16} h={13}><path d="M1 2h13v7H1z" fill="#c9dfe6" stroke="#a5b9c0" /><circle cx="7" cy="5.500" r="2" fill="#a5bdc6" /><path d="M8 7h6v5H8z" fill="#e0cf9f" stroke="#bfae80" /></Art></Segment>
                  <Segment $w={9} aria-label="Altre valute"><Caret c="#999" s={4} /></Segment>
                  <Segment $w={21}>%</Segment>
                  <Segment $w={21} aria-label="Separatore migliaia"><Art w={14} h={10}><g stroke="#999" strokeWidth="1.400"><ellipse cx="2.500" cy="5" rx="1.300" ry="2.700" /><ellipse cx="7" cy="5" rx="1.300" ry="2.700" /><ellipse cx="11.500" cy="5" rx="1.300" ry="2.700" /></g></Art></Segment>
                </Segments>
                <Segments>
                  <Segment $w={21} aria-label="Aumenta decimali"><Decimals /></Segment>
                  <Segment $w={20} aria-label="Riduci decimali"><Decimals flip /></Segment>
                </Segments>
              </Line>
            </Stack>
          </GroupBody>
        </Group>

        <Group $w={401}>
          <GroupTitle>Formato</GroupTitle>
          <GroupBody $gap={4}>
            <BigButton $w={60} $two>
              <BigIcon>
                <Art w={26} h={24} o={0.75}><path d="M1 1h21v19H1z" fill="#eef2fa" stroke="#9db0d6" /><path d="M7 1h5v5H7zM7 11h5v5H7z" fill="#e8a09a" /><path d="M7 6h10v5H7z" fill="#8fb0e8" /><path d="M1 6h21M1 11h21M1 16h21M7 1v19M12 1v19M17 1v19" stroke="#9db0d6" strokeWidth=".7" /><path d="M13 13h11v10H13z" fill="#f2f2f2" stroke="#999" /><path d="M18 15l-2 1 2 1M18 19l-2 1 2 1M20 15l2 1-2 1M20 19l2 1-2 1" stroke="#777" /></Art>
                <Caret c="#999" />
              </BigIcon>
              Formattazione condizionale
            </BigButton>
            <Gallery>
              <Swatches>
                <Swatch $bg="#fff" $fg="#111">Normale</Swatch>
                <Swatch $bg="#ffe9a0" $fg="#9c6a10">Neutro</Swatch>
                <Swatch $bg="#f8c6ce" $fg="#9c1020">Non valido</Swatch>
                <Swatch $bg="#cdeccd" $fg="#116a18">Valido</Swatch>
                <Swatch $bg="#f2f2f2" $fg="#f0852a" $border="#7f7f7f" $bold>Calcolo</Swatch>
                <Swatch $bg="#fff" $fg="#f0852a" $border="#f7b983" $kind="under">Cella collegata</Swatch>
                <Swatch $bg="#a0a0a0" $fg="#fff" $border="#555" $kind="double" $bold>Controlla cella</Swatch>
                <Swatch $bg="#f8cb9c" $fg="#4a4a78" $border="#7f7f7f">Input</Swatch>
              </Swatches>
              <MoreButton aria-label="Altri stili"><Art w={5} h={6}><path d="M0 0v6l5-3z" fill="#222" /></Art></MoreButton>
            </Gallery>
          </GroupBody>
        </Group>

        <Group $w={121}>
          <GroupTitle>Celle</GroupTitle>
          <GroupBody $pad={1}>
            <BigButton $w={39}><BigIcon><TableBlocks kind="insert" /><Caret c="#aaa" /></BigIcon>Inserisci</BigButton>
            <BigButton $w={38}><BigIcon><TableBlocks kind="delete" /><Caret c="#aaa" /></BigIcon>Elimina</BigButton>
            <BigButton $w={39} $on>
              <BigIcon>
                <Art w={24} h={24}><path d="M1 2h20M1 0v4M6 0v4M16 0v4M21 0v4" stroke="#35518f" /><path d="M1 5h22v16H12l-3 2H1z" fill="#f3f6fd" stroke="#4a68aa" /><path d="M8 9h7v8H8z" fill="#9db9f0" /><path d="M1 9h22M1 17h22M7 5v16M16 5v16M20 5v16" stroke="#7d9bd9" /></Art>
                <Caret />
              </BigIcon>
              Formato
            </BigButton>
          </GroupBody>
        </Group>

        <Group $w={73}>
          <GroupTitle>Temi</GroupTitle>
          <GroupBody $gap={6}>
            <BigButton $w={34}>
              <BigIcon>
                <Art w={23} h={24} o={0.8}><path d="M1 3h16l5 5v14H1z" fill="#f4f4f4" stroke="#aaa" /><path d="M17 3v5h5" stroke="#aaa" /><path d="M3 15l4-9 4 9M4.500 12h5" stroke="#93a9c2" strokeWidth="1.300" /><circle cx="14.500" cy="12.500" r="2.200" stroke="#93a9c2" strokeWidth="1.300" /><path d="M17 10v5" stroke="#93a9c2" strokeWidth="1.300" /><path d="M3 17h3v3H3z" fill="#8aa4cc" /><path d="M7 17h3v3H7z" fill="#cf8a84" /><path d="M11 17h3v3h-3z" fill="#a9c18a" /><path d="M15 17h3v3h-3z" fill="#c79fd0" /></Art>
                <Caret c="#aaa" />
              </BigIcon>
              Temi
            </BigButton>
            <Stack>
              <MenuButton $w={21} aria-label="Colori tema"><Art w={15} o={0.7}><path d="M1 1h6v6H1z" fill="#9fb9d3" stroke="#86a0bb" /><path d="M9 1h6v6H9z" fill="#d9a5a0" stroke="#bf8984" /><path d="M1 9h6v6H1z" fill="#bccb9b" stroke="#9fb07e" /><path d="M9 9h6v6H9z" fill="#b8a6cb" stroke="#9a87ae" /></Art><Caret c="#999" s={4} /></MenuButton>
              <MenuButton $w={21} aria-label="Caratteri tema"><Art w={16}><path d="M0 13.500L4.500 2.500 9 13.500M2 9.500h5" stroke="#9db6d2" strokeWidth="1.500" /><circle cx="12" cy="10.500" r="2.300" stroke="#9db6d2" strokeWidth="1.400" /><path d="M15 7V14" stroke="#9db6d2" strokeWidth="1.400" /></Art><Caret c="#999" s={4} /></MenuButton>
            </Stack>
          </GroupBody>
        </Group>
      </Ribbon>

      <FormulaBar>
        <NameBox defaultValue="A4" aria-label="Casella nome" />
        <Stepper aria-label="Nomi definiti"><Art w={5} h={9}><path d="M0 3.500h5L2.500 0zM0 5.500h5L2.500 9z" fill="#222" /></Art></Stepper>
        <FormulaTools>
          <button aria-label="Annulla immissione"><Art w={10} h={10}><circle cx="5" cy="5" r="4.700" fill="#8c8c8c" /><path d="M3 3l4 4M7 3L3 7" stroke="#fff" strokeWidth="1.400" /></Art></button>
          <button aria-label="Conferma"><Art w={10} h={10}><circle cx="5" cy="5" r="4.700" fill="#8c8c8c" /><path d="M2.500 5l2 2 3-4" stroke="#fff" strokeWidth="1.400" /></Art></button>
          <button aria-label="Generatore formule"><Art w={11} h={11}><path d="M4 0C-.500 2-.500 9 4 11" stroke="#bbb" /><ellipse cx="7" cy="5" rx="3" ry="2" fill="#b5b5b5" /></Art></button>
          <FxButton>fx</FxButton>
        </FormulaTools>
        <FormulaInput aria-label="Formula" />
      </FormulaBar>

      <SheetArea>
        <Grid>
          <colgroup><col width={28} />{columns.map(([c, w]) => <col key={c} width={w} />)}</colgroup>
          <thead>
            <tr><Corner />{columns.map(([c]) => <ColumnHead key={c} $selected={c === "A"}>{c}</ColumnHead>)}</tr>
          </thead>
          <tbody>
            <tr>
              <RowHead><ClippedNumber>3</ClippedNumber></RowHead>
              {columns.map(([c]) => <Cell key={c} $h={11} $edge={c === "H" || c === "I"} />)}
            </tr>
            {rows.map(([n, h]) => (
              <tr key={n}>
                <RowHead $selected={n === 4}>{n}</RowHead>
                {columns.map(([c, , flag]) => (
                  <Cell key={c} $h={h} $edge $flag={flag && !(n === 4 && c === "B")}>{n === 4 && c === "A" && <Selection />}</Cell>
                ))}
              </tr>
            ))}
            <tr>
              <RowHead />
              {columns.map(([c, , flag]) => <Cell key={c} $h={66} $edge $flag={flag} />)}
            </tr>
          </tbody>
        </Grid>
        <Gutter />
      </SheetArea>

      <Footer>
        <ViewSwitch>
          <ViewButton $active aria-label="Normale"><Art w={12} h={10}><path d="M0 0h12v10H0z" fill="#7fa6d0" /><path d="M0 2.500h12M0 5h12M0 7.500h12M3 0v10M6 0v10M9 0v10" stroke="#c6dbee" strokeWidth=".8" /></Art></ViewButton>
          <ViewButton aria-label="Layout di pagina"><Art w={16} h={11}><path d="M1 1h6v9H1zM9 1h6v9H9z" fill="#fafafa" stroke="#999" /><path d="M3 3v6M5 3v6M11 3v6M13 3v6" stroke="#aaa" strokeDasharray="1 1" /></Art></ViewButton>
        </ViewSwitch>
        <FooterRows>
          <SheetTabsRow>
            <SheetNav>
              {navShapes.map((d, i) => (
                <NavButton key={d} aria-label={["Primo", "Precedente", "Successivo", "Ultimo"][i]}>
                  <Art w={8} h={8}><path d={d} fill={i < 2 ? "#aaa" : "#333"} stroke={i < 2 ? "#aaa" : "#333"} strokeWidth=".8" /></Art>
                </NavButton>
              ))}
            </SheetNav>
            <SheetTabs>
              <SheetTab>Prodotti</SheetTab>
              {sheets.map((s) => <SheetTab key={s} $active={s === "18-12-2017"}>{s}</SheetTab>)}
            </SheetTabs>
            <ScrollTrack><ScrollThumb /></ScrollTrack>
            <ScrollGrip />
          </SheetTabsRow>
          <StatusBar>
            {[95, 301, 128].map((w) => <StatusCell key={w} $w={w} />)}
            <StatusCell $w={107}>Somma=0<Caret c="#111" s={8} /></StatusCell>
            <StatusCell $w={27} /><StatusCell $w={27} /><StatusCell $w={21} /><StatusCell />
          </StatusBar>
        </FooterRows>
      </Footer>

      <Dialog role="alertdialog" aria-label="Errore">
        <DialogBar />
        <DialogText>Errore</DialogText>
        <DialogActions><OkButton>OK</OkButton></DialogActions>
      </Dialog>
    </AppWindow>
  );
}
